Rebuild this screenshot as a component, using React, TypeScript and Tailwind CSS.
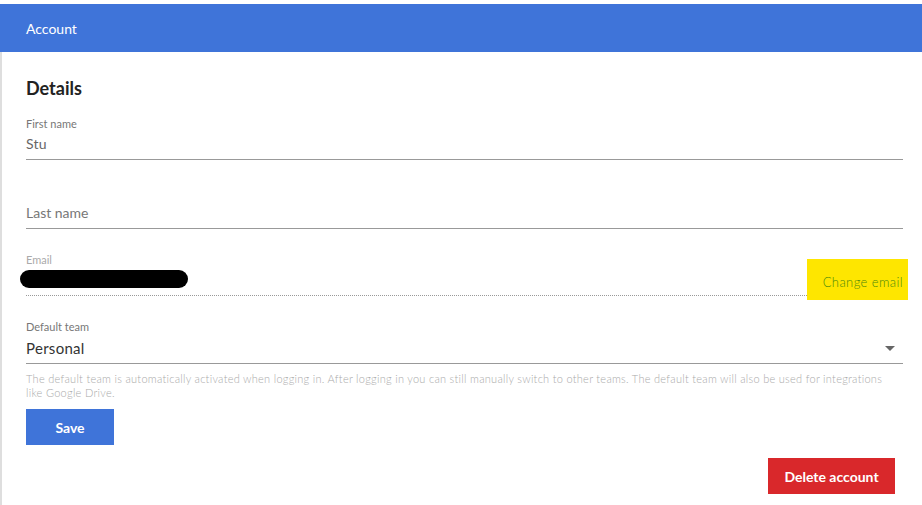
import { ReactNode } from "react";

const font = { fontFamily: "Lato, 'Open Sans', 'Liberation Sans', sans-serif" };

function Field({ label, children, className = "" }: { label?: string; children: ReactNode; className?: string }) {
  return (
    <div className={`flex flex-col ${className}`}>
      <div className="h-[14px] text-[11px] leading-[14px] text-[#777]">{label}</div>
      {children}
    </div>
  );
}

export default function App() {
  return (
    <div className="w-[922px] h-[505px] bg-white pt-[4px] overflow-hidden" style={font}>
      <div className="h-full border-l-2 border-[#dedede] flex flex-col">
        {/* Header */}
        <div className="h-[48px] bg-[#3f74d9] flex items-center pl-[26px] -ml-[2px] text-white text-[14px]">
          Account
        </div>

        <div className="flex flex-col pl-[24px] pr-[19px] pt-[24px]">
          <h2 className="text-[18px] leading-[24px] font-bold text-[#222]">Details</h2>

          {/* First name */}
          <Field label="First name" className="mt-[17px]">
            <div className="mt-[3px] h-[26px] border-b border-[#999] text-[14px] leading-[20px] text-[#666] tracking-[0.2px]">
              Stu
            </div>
          </Field>

          {/* Last name */}
          <Field className="mt-[26px]">
            <div className="mt-[3px] h-[26px] border-b border-[#999] text-[14px] leading-[20px] text-[#777]">
              Last name
            </div>
          </Field>

          {/* Email */}
          <div className="relative mt-[24px] flex flex-col">
            <div className="h-[14px] text-[11px] leading-[14px] text-[#aaa]">Email</div>
            <div className="mt-[3px] h-[26px] border-b border-dotted border-[#999]">
              <div className="-ml-[6px] h-[18px] w-[168px] rounded-full bg-black" />
            </div>
            <div className="absolute -right-[5px] top-[6px] w-[101px] h-[41px] bg-[#fee600] flex items-center justify-end pr-[5px] pt-[7px] text-[13px] tracking-[0.4px] font-light text-[#4f8a0c]">
              Change email
            </div>
          </div>

          {/* Default team */}
          <Field label="Default team" className="mt-[24px]">
            <div className="mt-[3px] h-[27px] border-b border-[#999] flex items-start justify-between">
              <span className="text-[15px] leading-[22px] text-[#333] tracking-[0.3px]">Personal</span>
              <svg width="10" height="6" viewBox="0 0 10 6" className="mt-[9px] mr-[8px]">
                <path d="M0 0 L10 0 L5 5 Z" fill="#666" />
              </svg>
            </div>
          </Field>

          <p className="mt-[8px] text-[11px] leading-[14px] font-light tracking-[0.28px] text-[#aaa] whitespace-nowrap">
            The default team is automatically activated when logging in. After logging in you can still manually switch to other teams. The default team will also be used for integrations
            <br />
            like Google Drive.
          </p>

          <div className="mt-[9px]">
            <button className="w-[88px] h-[36px] bg-[#3f74d9] text-white text-[14px] font-bold">Save</button>
          </div>

          <div className="mt-[13px] flex justify-end pr-[8px]">
            <button className="w-[127px] h-[36px] bg-[#d9282b] text-white text-[14px] font-bold">Delete account</button>
          </div>
        </div>
      </div>
    </div>
  );
}
